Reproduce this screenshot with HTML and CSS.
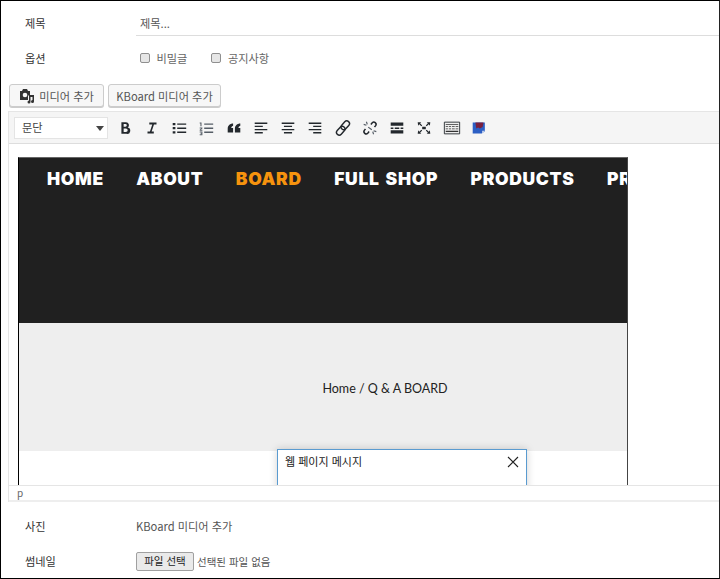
FILE: index.html
```html
<!DOCTYPE html>
<html lang="ko">
<head>
<meta charset="utf-8">
<title>글쓰기</title>
<link rel="stylesheet" href="styles.css">
</head>
<body>
<div class="frame">
  <div class="row row-title">
    <div class="label">제목</div>
    <div class="title-input">제목...</div>
  </div>
  <div class="row row-options">
    <div class="label">옵션</div>
    <div class="checks">
      <span class="check"><i class="box"></i>비밀글</span>
      <span class="check"><i class="box"></i>공지사항</span>
    </div>
  </div>
  <div class="media-buttons">
    <button class="wp-btn btn-media"><svg class="media-icon" width="16" height="16" viewBox="0 0 16 16"><path d="M1 3h2l1-2h4l1 2h2v4.500H9v4.500H1z" fill="#333"/><circle cx="6" cy="7" r="2.300" fill="#f7f7f7"/><path d="M10 7h5v6.500a1.500 1.500 0 1 1-1.500-1.500V9h-2v5a1.500 1.500 0 1 1-1.500-1.500z" fill="#333"/></svg>미디어 추가</button>
    <button class="wp-btn btn-kboard">KBoard 미디어 추가</button>
  </div>
  <div class="editor">
    <div class="toolbar">
      <div class="select">문단<i class="caret"></i></div>
      <div class="tools">
        <svg class="tool" viewBox="0 0 20 20"><path d="M6 3.500h5a3.300 3.300 0 0 1 2 6 3.500 3.500 0 0 1-1.500 7H6zM8.500 5.500v3h2a1.500 1.500 0 0 0 0-3zM8.500 10.500v4h2.500a2 2 0 0 0 0-4z" fill="#23282d" fill-rule="evenodd"/></svg>
        <svg class="tool" viewBox="0 0 20 20"><path d="M7 4h8v2h-2.800l-2.600 8H12v2H5v-2h2.700l2.600-8H7z" fill="#23282d"/></svg>
        <svg class="tool" viewBox="0 0 20 20"><path d="M3 4.500h3v2.500H3zM3 9h3v2.500H3zM3 13.500h3V16H3zM8 5h10v1.500H8zM8 9.500h10V11H8zM8 14h10v1.500H8z" fill="#23282d"/></svg>
        <svg class="tool" viewBox="0 0 20 20"><path d="M3 4h2v4H3.800V5H3zM3 9.500h3v1L4.200 12H6v1H3v-1l1.800-1.500H3zM3 14h3v4H3v-1h2v-.5H4v-1h1V15H3zM8 5h10v1.500H8zM8 9.500h10V11H8zM8 14h10v1.500H8z" fill="#555d66"/></svg>
        <svg class="tool" viewBox="0 0 20 20"><path d="M9 5v2.500C7.500 8 7 9 7 10h2v5H3v-4.500C3 7.500 5.500 5 9 5zM17 5v2.500c-1.500.5-2 1.500-2 2.500h2v5h-6v-4.500C11 7.500 13.500 5 17 5z" fill="#23282d"/></svg>
        <svg class="tool" viewBox="0 0 20 20"><path d="M3 4h14v1.500H3zM3 7.500h9V9H3zM3 11h14v1.500H3zM3 14.500h9V16H3z" fill="#23282d"/></svg>
        <svg class="tool" viewBox="0 0 20 20"><path d="M3 4h14v1.500H3zM5.500 7.500h9V9h-9zM3 11h14v1.500H3zM5.500 14.500h9V16h-9z" fill="#23282d"/></svg>
        <svg class="tool" viewBox="0 0 20 20"><path d="M3 4h14v1.500H3zM8 7.500h9V9H8zM3 11h14v1.500H3zM8 14.500h9V16H8z" fill="#23282d"/></svg>
        <svg class="tool" viewBox="0 0 20 20"><g fill="none" stroke="#23282d" stroke-width="1.600"><rect x="9.500" y="1.500" width="6" height="11" rx="3" transform="rotate(42 12.500 7)"/><rect x="4.500" y="7.500" width="6" height="11" rx="3" transform="rotate(42 7.500 13)"/></g></svg>
        <svg class="tool" viewBox="0 0 20 20"><path d="M11 6l1.500-1.800a2.500 2.500 0 0 1 3.800 3.200L15 9M9 14l-1.500 1.800a2.500 2.500 0 0 1-3.800-3.200L5 11" fill="none" stroke="#23282d" stroke-width="1.700"/><path d="M6 3l1 3M3 6l3 1M14 17l-1-3M17 14l-3-1M8 9l4 3" fill="none" stroke="#555d66" stroke-width="1.300"/></svg>
        <svg class="tool" viewBox="0 0 20 20"><path d="M3 4h14v3.500H3zM3 12.500h14V16H3zM3 9.500h3V11H3zM7.500 9.500h5V11h-5zM14 9.500h3V11h-3z" fill="#23282d"/></svg>
        <svg class="tool" viewBox="0 0 20 20"><path d="M3 3.500h4L5.700 4.800l2.300 2.300-1 1-2.300-2.300L3.500 7.500zM17 3.500h-4l1.300 1.300-2.300 2.300 1 1 2.300-2.300 1.200 1.700zM3 16.500h4l-1.300-1.300L8 12.900l-1-1-2.300 2.300-1.200-1.700zM17 16.500h-4l1.300-1.300-2.300-2.300 1-1 2.300 2.300 1.200-1.700zM8 8.500h4v3H8z" fill="#23282d"/></svg>
        <svg class="tool" viewBox="0 0 20 20"><path d="M1.500 3.500h17v13h-17z" fill="#eee" stroke="#23282d"/><path d="M3 5.500h14v1H3zM3 8h2.500v1H3zM6.500 8H9v1H6.500zM10 8h3v1h-3zM14 8h3v1h-3zM3 10.500h2.500v1H3zM6.500 10.500H9v1H6.500zM10 10.500h3v1h-3zM14 10.500h3v1h-3zM3 13h14v1.500H3z" fill="#333"/></svg>
        <svg class="tool" viewBox="0 0 20 20"><path d="M3 4h13.500v9.500L13 16H3z" fill="#2c5fc4"/><path d="M6 4h9l-1 5-3 1.500-2-1-2 1z" fill="#7a1f3d"/><path d="M13.500 16v-3h3z" fill="#c8d4ee"/></svg>
      </div>
    </div>
    <div class="content">
      <div class="shot">
        <nav class="shot-nav">
          <span>HOME</span><span>ABOUT</span><span class="active">BOARD</span><span>FULL SHOP</span><span>PRODUCTS</span><span>PRODUCTS</span>
        </nav>
        <div class="crumb">Home / Q &amp; A BOARD</div>
      </div>
      <div class="dialog">
        <span>웹 페이지 메시지</span>
        <svg width="12" height="12" viewBox="0 0 12 12"><path d="M1 1l10 10M11 1L1 11" stroke="#222" stroke-width="1.100" fill="none"/></svg>
      </div>
    </div>
    <div class="statusbar">p</div>
  </div>
  <div class="row row-photo">
    <div class="label">사진</div>
    <div class="value">KBoard 미디어 추가</div>
  </div>
  <div class="row row-thumb">
    <div class="label">썸네일</div>
    <div class="file"><span class="file-btn">파일 선택</span><span class="file-none">선택된 파일 없음</span></div>
  </div>
</div>
</body>
</html>
```

FILE: styles.css
```css
* { box-sizing: border-box; }
html, body { margin: 0; padding: 0; background: #fff; }
body { font-family: "Noto Sans CJK KR", "Noto Sans", sans-serif; font-size: 11.200px; color: #444; }
.frame {
  width: 720px; height: 579px; border: 1px solid #000; border-right-color: #222;
  overflow: hidden; display: flex; flex-direction: column;
}
.row { display: flex; align-items: center; flex: none; }
.label { width: 135px; padding-left: 24px; color: #333; flex: none; }
.row-title { height: 35px; margin-top: 4px; }
.title-input {
  flex: 1; align-self: flex-start; height: 31px; line-height: 36px; padding-left: 4px; color: #555;
  border-bottom: 1px solid #ddd;
}
.row-options { height: 36px; }
.checks { display: flex; gap: 24px; padding-left: 4px; color: #666; }
.check { display: flex; align-items: center; gap: 6.500px; }
.box {
  width: 10px; height: 10px; background: #e6e6e6; border: 1px solid #8f8f8f; border-radius: 2px; display: block;
}
.media-buttons { display: flex; gap: 4px; padding-left: 8px; margin-top: 8px; flex: none; }
.wp-btn {
  height: 23px; font: inherit; color: #555; background: #f7f7f7;
  border: 1px solid #ccc; border-radius: 3px; box-shadow: 0 1px 0 #ccc;
  display: flex; align-items: center; justify-content: center; gap: 4px; padding: 0;
}
.btn-media { width: 95px; }
.btn-kboard { width: 113px; }
.editor {
  margin: 4px 0 0 7px; flex: none; border-left: 1px solid #e5e5e5;
  width: 712px;
}
.toolbar {
  height: 33px; background: #f5f5f5; border-top: 1px solid #e5e5e5; border-bottom: 1px solid #ddd;
  display: flex; align-items: center; padding-left: 5px;
}
.select {
  width: 94px; height: 22px; background: #fff; border: 1px solid #e4e4e4; line-height: 19px; padding-left: 7px;
  color: #444; position: relative; flex: none;
}
.caret {
  position: absolute; right: 3px; top: 8px; width: 0; height: 0;
  border-left: 4px solid transparent; border-right: 4px solid transparent; border-top: 5px solid #444;
}
.tools { display: flex; gap: 9.250px; margin-left: 7.500px; align-items: center; }
.tool { width: 18px; height: 18px; flex: none; }
.content { height: 341px; position: relative; overflow: hidden; padding: 13px 0 0 9px; }
.shot {
  width: 610px; height: 340px; border-left: 1px solid #000; border-right: 1px solid #444; overflow: hidden;
  background: linear-gradient(#202020 0, #202020 165px, #eee 165px, #eee 293px, #fff 293px);
  border-top: 1px solid #666;
}
.shot-nav {
  display: flex; gap: 32.500px; padding: 10px 0 0 28px; height: 165px; white-space: nowrap;
  font-family: "Inter", sans-serif; font-weight: 900; font-size: 17.500px; color: #fff; line-height: 22px;
  letter-spacing: .65px; word-spacing: 2px;
}
.shot-nav .active { color: #f6930e; }
.crumb {
  margin-top: 56px; text-align: center; font-family: "Lato", sans-serif;
  font-size: 12.500px; color: #222; line-height: 20px; padding-left: 124px;
}
.dialog {
  position: absolute; left: 268px; top: 305px; width: 250px; height: 60px; background: #fff;
  border: 1px solid #5a9bd0; box-shadow: 0 0 8px rgba(0,0,0,.18); padding: 3px 7px 0 7px; color: #222;
  display: flex; justify-content: space-between; align-items: flex-start; font-size: 11px;
}
.dialog svg { margin-top: 3px; }
.statusbar { height: 17px; background: #fff; border-top: 1px solid #e5e5e5; border-bottom: 2px solid #eee; padding-left: 8px; font-size: 10px; line-height: 13px; color: #666; position: relative; }
.row-photo { height: 24px; margin-top: 12px; }
.value { color: #555; }
.row-thumb { height: 24px; margin-top: 11px; }
.file { display: flex; align-items: center; gap: 3px; font-size: 10.500px; color: #555; }
.file-btn {
  width: 58px; height: 19px; background: #eaeaea; border: 1px solid #a0a0a0; border-radius: 2px; color: #222;
  text-align: center; line-height: 16px; font-size: 10.500px;
}
```
